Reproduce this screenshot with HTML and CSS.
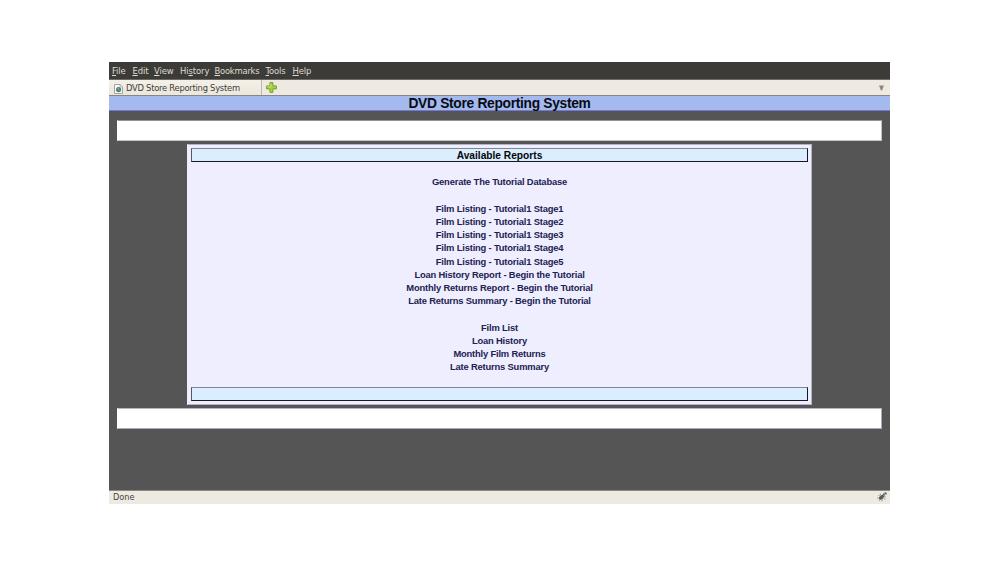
FILE: index.html
```html
<!DOCTYPE html>
<html lang="en">
<head>
<meta charset="utf-8">
<title>DVD Store Reporting System</title>
<link rel="stylesheet" href="styles.css">
</head>
<body>
<div class="window">
  <nav class="menubar">
    <span class="m-file"><u>F</u>ile</span><span class="m-edit"><u>E</u>dit</span><span class="m-view"><u>V</u>iew</span><span class="m-history">Hi<u>s</u>tory</span><span class="m-bookmarks"><u>B</u>ookmarks</span><span class="m-tools"><u>T</u>ools</span><span class="m-help"><u>H</u>elp</span>
  </nav>
  <div class="tabbar">
    <div class="tab">
      <svg class="favicon" viewBox="0 0 9 10"><path d="M.5.5h5.7l2.3 2.3v6.7h-8z" fill="#fafaf7" stroke="#a3a39c"/><path d="M6 .5v2.5h2.5" fill="#ddd" stroke="#aaa" stroke-width=".6"/><circle cx="4.6" cy="5.6" r="2.6" fill="#4c7898"/><path d="M3 4.6l2-.7.4 1-1.2 1.3zM5 6.2l1.5-.5-.7 1.6z" fill="#87b34c"/></svg>
      <span class="label">DVD Store Reporting System</span>
    </div>
    <svg class="add" viewBox="0 0 11 11"><path d="M3.9.6h3v3.3h3.5v3H6.9v3.5h-3V6.9H.6v-3h3.3z" fill="#a3d43c" stroke="#719b2c" stroke-width=".9"/><path d="M4.8 1.6v3.2H1.6" fill="none" stroke="#c9ea7b" stroke-width=".8"/></svg>
    <svg class="arrow" viewBox="0 0 5 6"><path d="M0 .5h5L3 5.5H2z" fill="#8b8983"/></svg>
  </div>
  <h1 class="title">DVD Store Reporting System</h1>
  <main class="page">
    <div class="strip"></div>
    <section class="panel">
      <h2 class="bar">Available Reports</h2>
      <div class="reports">
        <ul>
          <li>Generate The Tutorial Database</li>
        </ul>
        <ul>
          <li>Film Listing - Tutorial1 Stage1</li>
          <li>Film Listing - Tutorial1 Stage2</li>
          <li>Film Listing - Tutorial1 Stage3</li>
          <li>Film Listing - Tutorial1 Stage4</li>
          <li>Film Listing - Tutorial1 Stage5</li>
          <li>Loan History Report - Begin the Tutorial</li>
          <li>Monthly Returns Report - Begin the Tutorial</li>
          <li>Late Returns Summary - Begin the Tutorial</li>
        </ul>
        <ul>
          <li>Film List</li>
          <li>Loan History</li>
          <li>Monthly Film Returns</li>
          <li>Late Returns Summary</li>
        </ul>
      </div>
      <div class="bar"></div>
    </section>
    <div class="strip lower"></div>
  </main>
  <footer class="status">
    <span>Done</span>
    <svg class="bug" viewBox="0 0 10 10"><path d="M1 3l3 2M3 1.5l1.5 3M0 6.2l4-.7M2 9l2.3-3M5 9.5V6M8.5 7.5L5.5 5.5M9 5L6 4.5" stroke="#8b8b86" stroke-width=".8"/><ellipse cx="4.5" cy="5.3" rx="3" ry="1.7" transform="rotate(-42 4.5 5.3)" fill="#555b58"/><circle cx="7" cy="2.6" r="1.3" fill="#777"/><path d="M7.2.5l2.3.2v2z" fill="#222"/></svg>
  </footer>
</div>
</body>
</html>
```
FILE: styles.css
```css
* { box-sizing: border-box; }
body { margin: 0; height: 566px; padding: 62px 0 0 109px; background: #fff; font-family: "Liberation Sans", Arial, sans-serif; }
.window { width: 781px; height: 442px; display: flex; flex-direction: column; background: #555; }
.menubar { height: 18px; display: flex; padding-left: 3px; background: #3c3b37; border-bottom: 1px solid #6b6964; color: #dfdbd2; font: 9.4px/17px "DejaVu Sans Condensed", "DejaVu Sans", sans-serif; font-stretch: condensed; letter-spacing: -0.1px; white-space: nowrap; }
.menubar u { text-underline-offset: 1px; text-decoration-thickness: 1px; }
.m-file { width: 20.5px; }
.m-edit { width: 21.5px; }
.m-view { width: 26px; }
.m-history { width: 34.5px; }
.m-bookmarks { width: 51px; letter-spacing: -0.25px; }
.m-tools { width: 27px; }
.tabbar { height: 16px; display: flex; align-items: center; background: #eeeae2; border-bottom: 1px solid #888680; }
.tab { width: 153px; height: 15px; display: flex; align-items: center; padding-left: 5px; gap: 3px; background: linear-gradient(#f4f0e9, #ece7dc); border-right: 1px solid #bcb8b0; color: #3c3c3a; font: 9.3px/15px "DejaVu Sans Condensed", "DejaVu Sans", sans-serif; font-stretch: condensed; letter-spacing: -0.25px; white-space: nowrap; }
.label { padding-bottom: 1px; }
.favicon { width: 9px; height: 10px; margin-top: 2px; }
.add { width: 11px; height: 11px; margin-left: 4px; }
.arrow { width: 5px; height: 6px; margin-left: auto; margin-right: 6px; }
.title { height: 15px; margin: 0; background: #a4baee; border-bottom: 1px solid #7378d8; color: #080a14; font-size: 13.8px; line-height: 15px; letter-spacing: -0.31px; text-align: center; }
.page { flex: 1; padding: 9px 8px 0; }
.strip { height: 21px; background: #fff; border: 1px solid #c3c3cc; border-top-color: #929292; border-left-color: #fff; }
.panel { width: 625px; height: 261px; margin: 3px 0 3px 70px; padding: 3px; display: flex; flex-direction: column; background: #eeeeff; border: 1px solid #b3b3c3; border-left-color: #eeeeff; }
.bar { height: 14px; flex: none; margin: 0; background: #dbeeff; border: 1px solid #17191c; border-top-color: #80868c; border-left-color: #555a60; color: #050608; font-size: 10.2px; line-height: 13px; text-align: center; }
.reports { flex: 1; display: flex; flex-direction: column; gap: 13.2px; padding-top: 13.3px; color: #222250; font-size: 9.4px; font-weight: bold; line-height: 13.2px; letter-spacing: -0.18px; text-align: center; }
.reports ul { list-style: none; margin: 0; padding: 0; }
.lower { border-color: #b5b5c5 #aaaabf #aaaabf #fff; }
.status { height: 14px; display: flex; align-items: flex-start; justify-content: space-between; padding: 0 3px 0 4px; background: #eeeae2; border-top: 1px solid #8c8983; color: #444; font: 9.1px/12px "DejaVu Sans Condensed", "DejaVu Sans", sans-serif; font-stretch: condensed; }
.bug { width: 10px; height: 10px; margin-top: 1px; }
```
